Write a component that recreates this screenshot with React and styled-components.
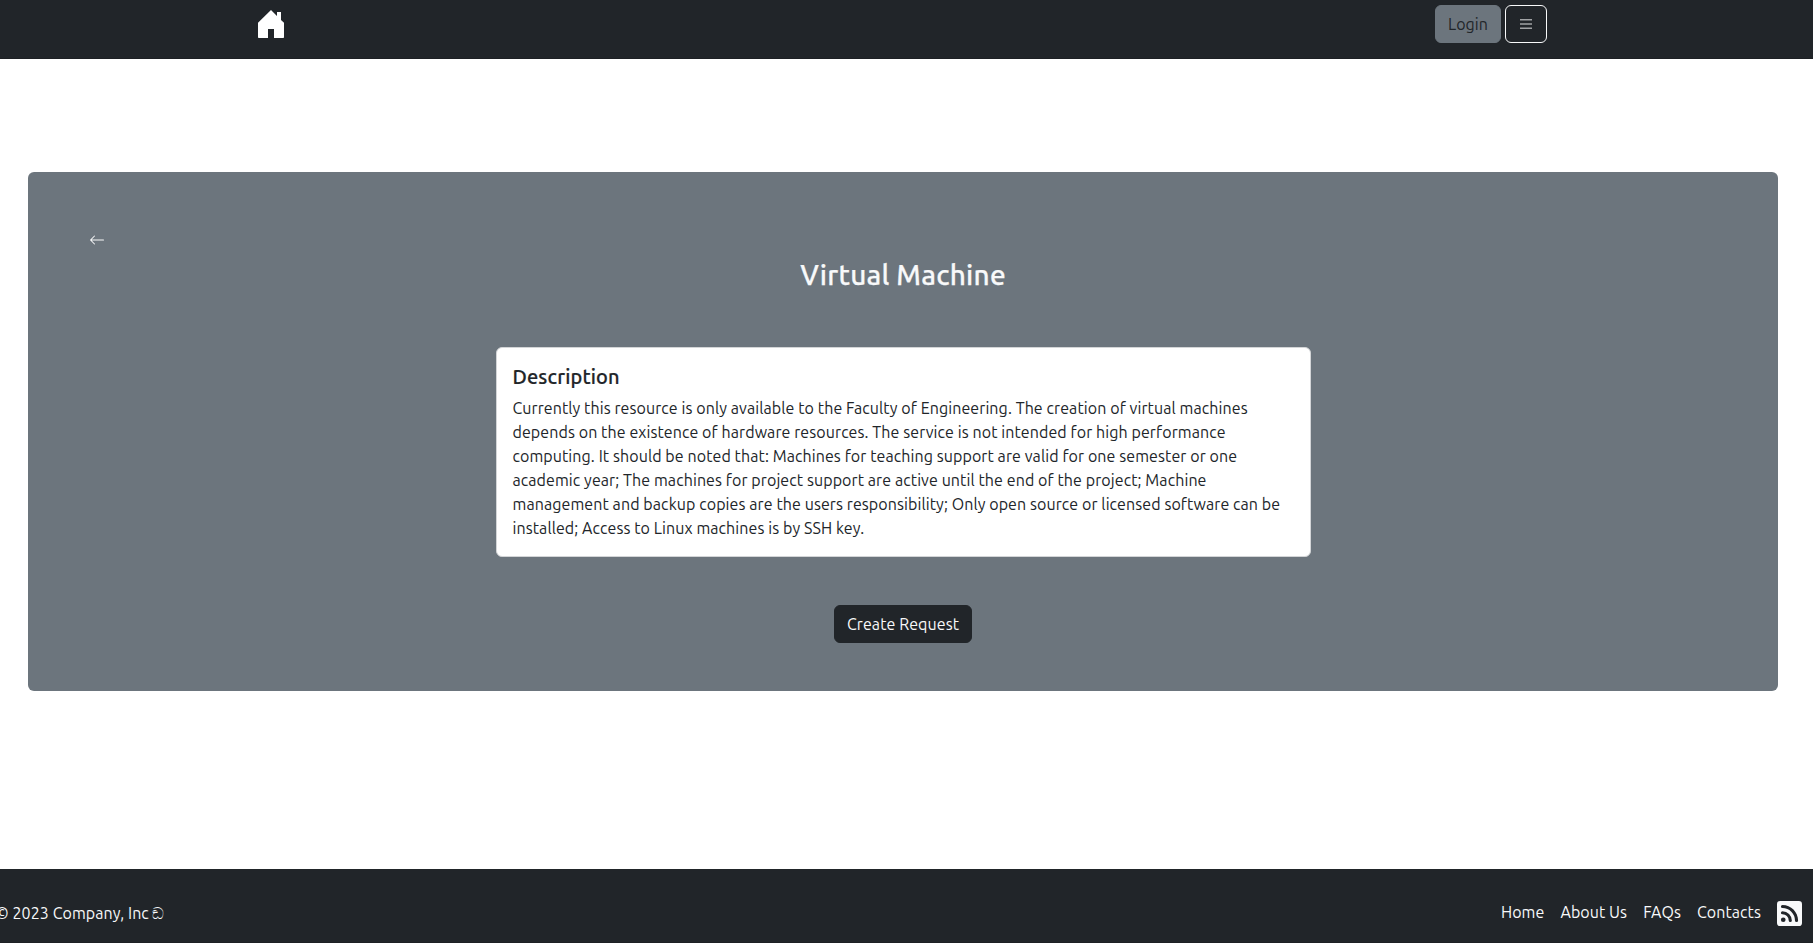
import React from 'react';
import styled, { createGlobalStyle } from 'styled-components';
import { BsArrowLeft, BsRssFill } from 'react-icons/bs';

const GlobalStyle = createGlobalStyle`
  * { box-sizing: border-box; }
  body {
    margin: 0;
    background: #fff;
    color: #212529;
    font: 400 16px/24px Ubuntu, "Noto Sans", sans-serif;
    overflow: hidden;
  }
  h2, h5, p { margin: 0; }
`;

const Page = styled.div`
  height: 943px;
  display: flex;
  flex-direction: column;
  overflow: hidden;
`;

const Header = styled.header`
  height: 59px;
  background: #212529;
  border-bottom: 1px solid #1d2024;
`;

const HeaderInner = styled.div`
  width: 1320px;
  margin: 0 auto;
  padding: 5px 19.5px 0 11.5px;
  display: flex;
  justify-content: space-between;
  align-items: flex-start;
`;

const HomeLink = styled.a`
  display: block;
  padding-top: 5px;
  svg { display: block; }
`;

const HeaderActions = styled.div`
  display: flex;
  gap: 4px;
`;

const Button = styled.button`
  width: ${(p) => p.$width}px;
  height: 38px;
  padding: 0;
  border: 1px solid ${(p) => p.$border || p.$bg};
  border-radius: 6px;
  background: ${(p) => p.$bg};
  color: ${(p) => p.$color};
  font: inherit;
  display: flex;
  align-items: center;
  justify-content: center;
`;

const Label = styled.span`
  white-space: nowrap;
  font-size: ${(p) => p.$size || 16}px;
  letter-spacing: ${(p) => p.$track ?? 0.08}px;
`;

const Panel = styled.main`
  width: 1750px;
  height: 519px;
  margin: 113px 0 0 28px;
  padding: 60px 61px 0;
  border-radius: 6px;
  background: #6c757d;
  display: flex;
  flex-direction: column;
  align-items: center;
`;

const BackLink = styled.a`
  align-self: flex-start;
  height: 16px;
  color: #f8f9fa;
  svg { display: block; }
`;

const Title = styled.h2`
  margin-top: 10px;
  height: 34px;
  line-height: 34px;
  font-weight: 500;
  color: #f8f9fa;
  -webkit-text-stroke: 0.25px currentColor;
`;

const Card = styled.section`
  width: 815px;
  height: 210px;
  margin-top: 55px;
  padding: 16px;
  border: 1px solid #d3d5d7;
  border-radius: 6px;
  background: #fff;
`;

const CardTitle = styled.h5`
  height: 25px;
  margin-bottom: 7px;
  padding-top: 1px;
  line-height: 24px;
  font-weight: 500;
  -webkit-text-stroke: 0.2px currentColor;
`;

const Line = styled(Label)`
  display: block;
`;

const CreateRow = styled.div`
  margin-top: 48px;
`;

const Footer = styled.footer`
  height: 74px;
  margin-top: 178px;
  padding: 31px 11px 0 0;
  background: #212529;
  border-bottom: 1px solid #1d2024;
  color: #f8f9fa;
  display: flex;
  justify-content: space-between;
  align-items: flex-start;
`;

const Copyright = styled.p`
  margin: 1px 0 0 -4.5px;
  display: flex;
  gap: 3.5px;
`;

const FooterNav = styled.nav`
  display: flex;
  gap: 16px;
  svg { display: block; margin-top: 1px; }
`;

const lines = [
  'Currently this resource is only available to the Faculty of Engineering. The creation of virtual machines',
  'depends on the existence of hardware resources. The service is not intended for high performance',
  'computing. It should be noted that: Machines for teaching support are valid for one semester or one',
  'academic year; The machines for project support are active until the end of the project; Machine',
  'management and backup copies are the users responsibility; Only open source or licensed software can be',
  'installed; Access to Linux machines is by SSH key.',
];

const links = ['Home', 'About Us', 'FAQs', 'Contacts'];

export default function App() {
  return (
    <Page>
      <GlobalStyle />
      <Header>
        <HeaderInner>
          <HomeLink aria-label="Home">
            <svg width="26" height="28" viewBox="0 0 26 28" fill="#fff">
              <path d="M13 0L19 6V2H23V10L26 12.7V27.2Q26 28 25.2 28H16V19H10V28H.8Q0 28 0 27.2V12.7Z" />
            </svg>
          </HomeLink>
          <HeaderActions>
            <Button $width={66} $bg="#6c757d" $color="#212529"><Label>Login</Label></Button>
            <Button $width={42} $bg="#212529" $border="#f8f9fa" aria-label="Menu">
              <svg width="12" height="10" viewBox="0 0 12 10" fill="#a0a2a4">
                <path d="M0 0H12V1.4H0ZM0 4.3H12V5.7H0ZM0 8.6H12V10H0Z" />
              </svg>
            </Button>
          </HeaderActions>
        </HeaderInner>
      </Header>
      <Panel>
        <BackLink aria-label="Back"><BsArrowLeft size={16} /></BackLink>
        <Title><Label $size={28} $track={0.22}>Virtual Machine</Label></Title>
        <Card>
          <CardTitle><Label $size={20} $track={0.14}>Description</Label></CardTitle>
          {lines.map((text) => (
            <Line as="p" key={text} $track={0.088}>{text}</Line>
          ))}
        </Card>
        <CreateRow>
          <Button $width={138} $bg="#212529" $color="#f8f9fa"><Label>Create Request</Label></Button>
        </CreateRow>
      </Panel>
      <Footer>
        <Copyright><Label>© 2023 Company, Inc</Label><Label>ඞ</Label></Copyright>
        <FooterNav>
          {links.map((text) => <Label key={text}>{text}</Label>)}
          <BsRssFill size={25} />
        </FooterNav>
      </Footer>
    </Page>
  );
}
